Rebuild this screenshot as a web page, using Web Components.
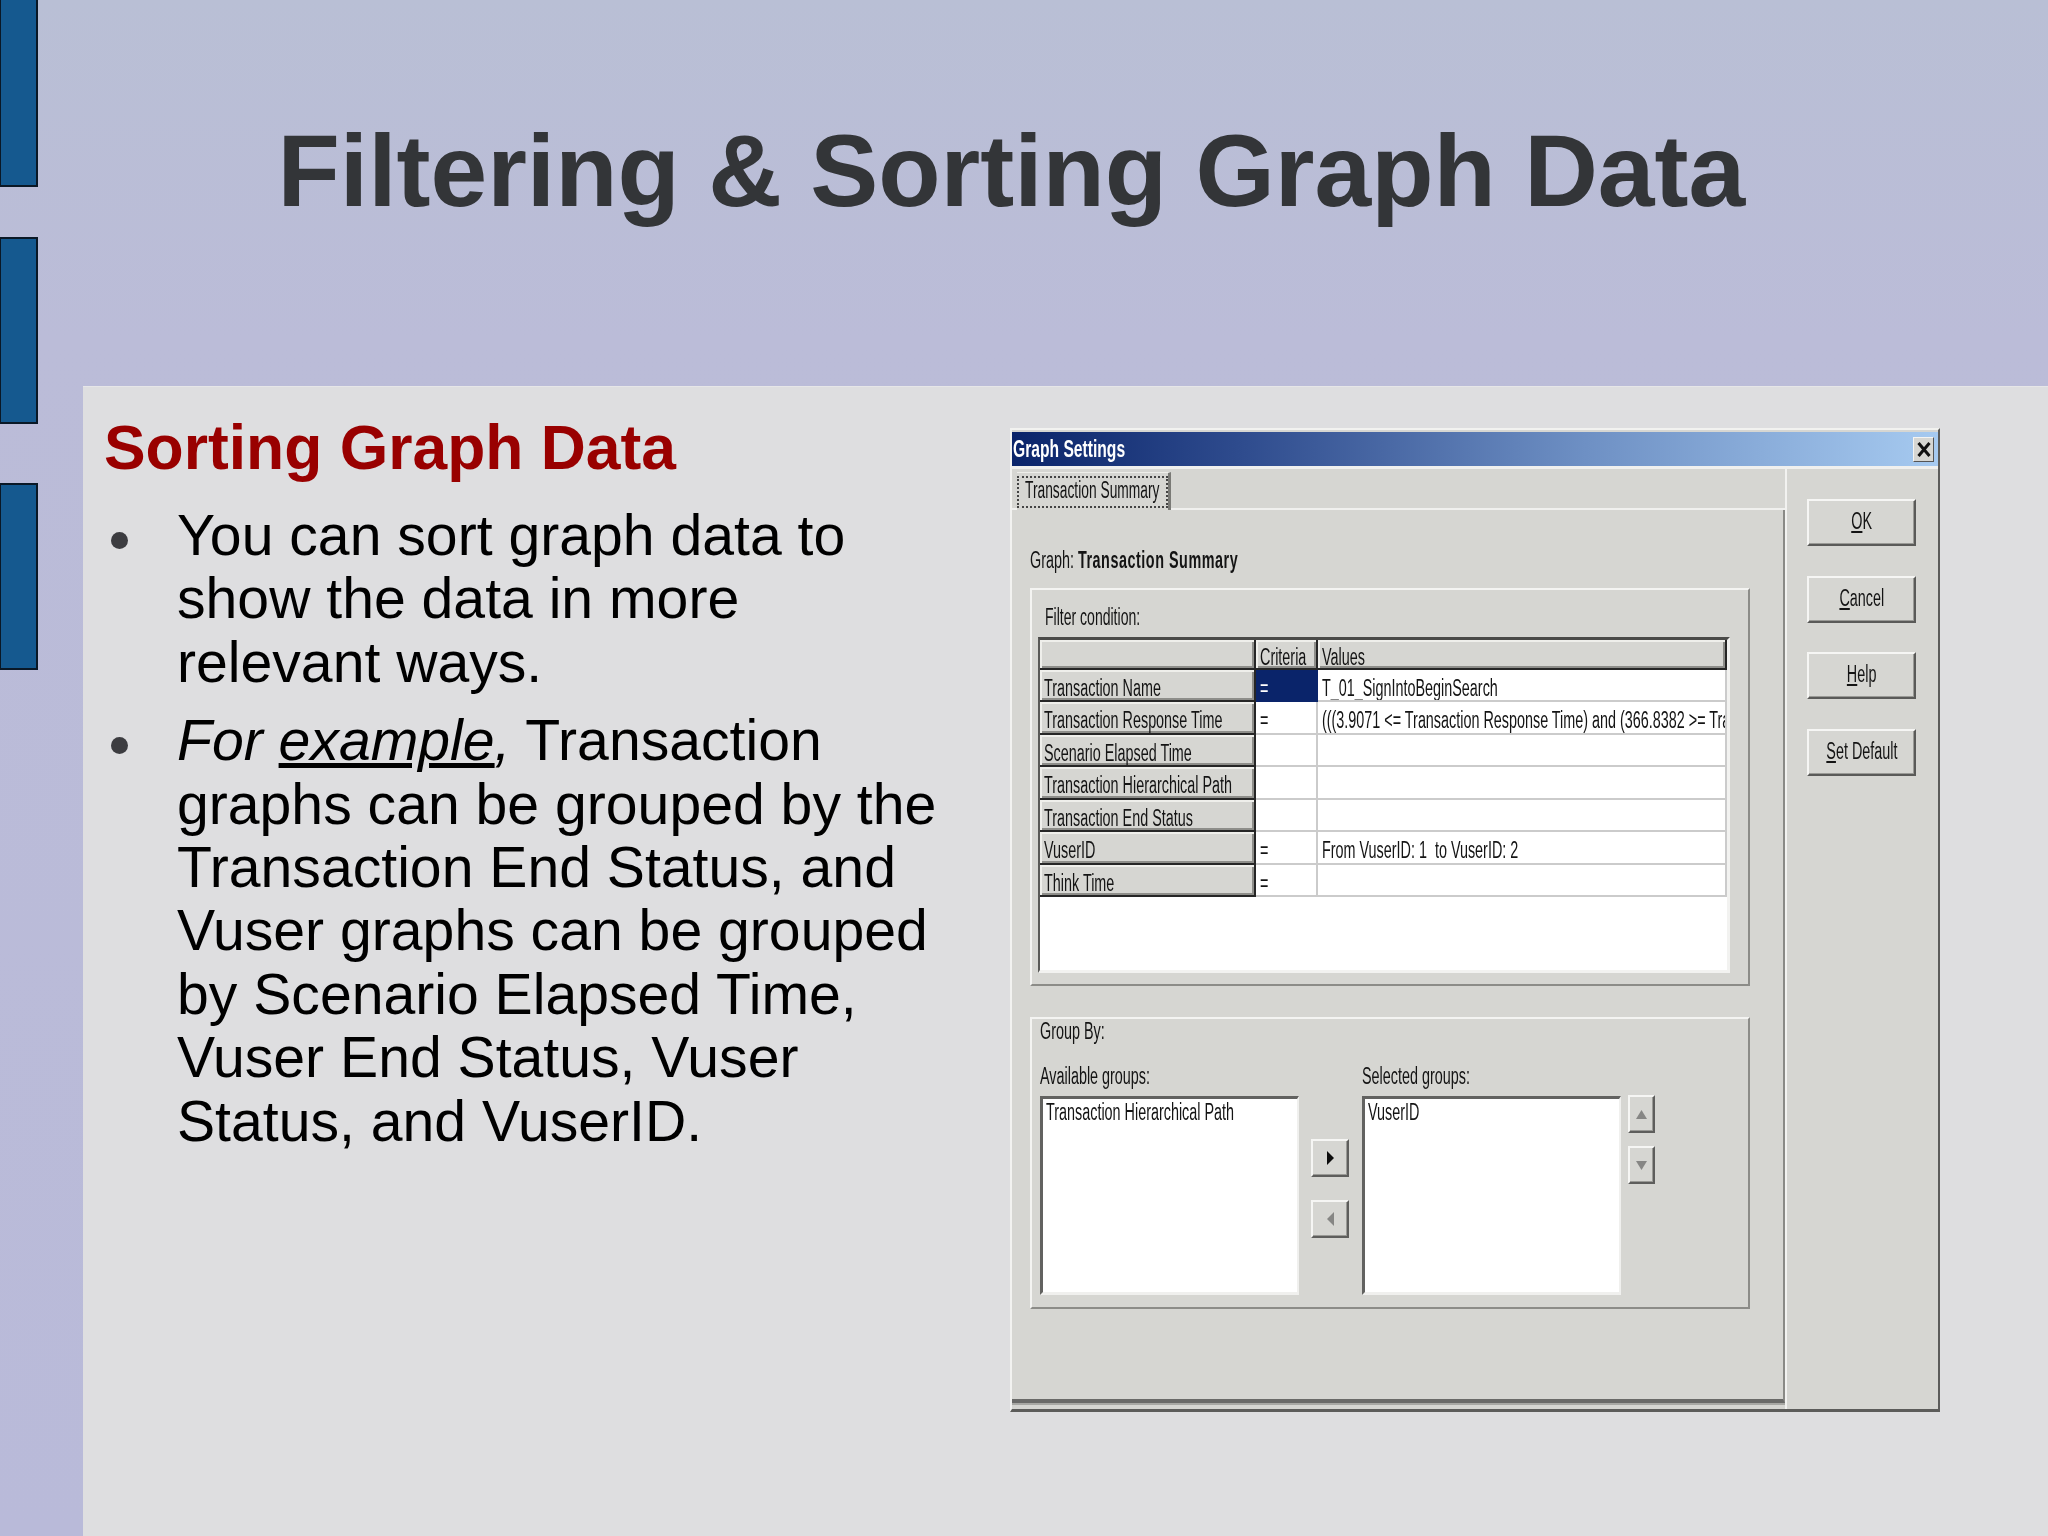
<!DOCTYPE html>
<html lang="en"><head><meta charset="utf-8"><title>Filtering &amp; Sorting Graph Data</title>
<style>html,body{margin:0;padding:0;background:#bcbbd8}</style></head>
<body>
<slide-deck>
  <side-bar slot="side"></side-bar>
  <side-bar slot="side"></side-bar>
  <side-bar slot="side"></side-bar>
  <slide-title slot="title">Filtering &amp; Sorting Graph Data</slide-title>
  <slide-notes slot="notes" heading="Sorting Graph Data">
    <bullet-item>You can sort graph data to show the data in more relevant ways.</bullet-item>
    <bullet-item><i>For <u>example</u>,</i> Transaction graphs can be grouped by the Transaction End Status, and Vuser graphs can be grouped by Scenario Elapsed Time, Vuser End Status, Vuser Status, and VuserID.</bullet-item>
  </slide-notes>
  <win-dialog slot="shot" caption="Graph Settings">
    <win-tab slot="tab"><win-t style="--sx:.6">Transaction Summary</win-t></win-tab>
    <div slot="graph"><win-t>Graph: <b style="letter-spacing:.85px">Transaction Summary</b></win-t></div>

    <win-group slot="filter" label="Filter condition:">
      <win-grid>
        <win-cell kind="head"></win-cell><win-cell kind="head"><win-t>Criteria</win-t></win-cell><win-cell kind="head"><win-t>Values</win-t></win-cell>

        <win-cell kind="head"><win-t>Transaction Name</win-t></win-cell><win-cell kind="sel"><win-t>=</win-t></win-cell><win-cell><win-t>T_01_SignIntoBeginSearch</win-t></win-cell>

        <win-cell kind="head"><win-t>Transaction Response Time</win-t></win-cell><win-cell><win-t>=</win-t></win-cell><win-cell><win-t>(((3.9071 &lt;= Transaction Response Time) and (366.8382 &gt;= Tra</win-t></win-cell>

        <win-cell kind="head"><win-t>Scenario Elapsed Time</win-t></win-cell><win-cell></win-cell><win-cell></win-cell>

        <win-cell kind="head"><win-t>Transaction Hierarchical Path</win-t></win-cell><win-cell></win-cell><win-cell></win-cell>

        <win-cell kind="head"><win-t>Transaction End Status</win-t></win-cell><win-cell></win-cell><win-cell></win-cell>

        <win-cell kind="head"><win-t>VuserID</win-t></win-cell><win-cell><win-t>=</win-t></win-cell><win-cell><win-t>From VuserID: 1&nbsp; to VuserID: 2</win-t></win-cell>

        <win-cell kind="head"><win-t>Think Time</win-t></win-cell><win-cell><win-t>=</win-t></win-cell><win-cell></win-cell>
      </win-grid>
    </win-group>

    <win-groupby slot="group">
      <win-t slot="title">Group By:</win-t>
      <win-t slot="avail-label">Available groups:</win-t>
      <win-t slot="sel-label">Selected groups:</win-t>
      <win-list slot="avail"><win-t>Transaction Hierarchical Path</win-t></win-list>
      <win-list slot="sel"><win-t>VuserID</win-t></win-list>
      <win-arrow slot="move" dir="right"></win-arrow>
      <win-arrow slot="move" dir="left" disabled></win-arrow>
      <win-arrow slot="order" dir="up" disabled></win-arrow>
      <win-arrow slot="order" dir="down" disabled></win-arrow>
    </win-groupby>

    <win-button slot="action"><win-t c><u>O</u>K</win-t></win-button>
    <win-button slot="action"><win-t c><u>C</u>ancel</win-t></win-button>
    <win-button slot="action"><win-t c><u>H</u>elp</win-t></win-button>
    <win-button slot="action"><win-t c><u>S</u>et Default</win-t></win-button>
  </win-dialog>
</slide-deck>

<script>
function def(name, css, html){
  customElements.define(name, class extends HTMLElement{
    constructor(){super();const s=this.attachShadow({mode:'open'});
      const h=typeof html==='function'?html(this):html;
      s.innerHTML='<style>'+css+'</style>'+h;}
  });
}
const SANS='"Liberation Sans",Arial,sans-serif';
def('slide-deck',`
  :host{display:grid;grid-template-columns:83px 1fr;width:2048px;height:1536px;overflow:hidden;
    background:linear-gradient(180deg,#b9bfd5 0,#bbbcd8 22%,#b9bad9 100%);font-family:${SANS}}
  .side{display:flex;flex-direction:column}
  .main{display:flex;flex-direction:column;min-width:0}
  .panel{flex:1;display:flex;background:#dedee0;border-top:1px solid #e6e6e8;min-height:0}
  .shot{padding-top:41px}
`,`<div class="side"><slot name="side"></slot></div>
<div class="main"><slot name="title"></slot>
<div class="panel"><slot name="notes"></slot><div class="shot"><slot name="shot"></slot></div></div></div>`);

def('side-bar',`
  :host{display:block;width:38px;height:187px;box-sizing:border-box;background:#15598f;border:2px solid #0a1826;border-left-width:1px}
  :host(:nth-of-type(1)){border-top:0}
  :host(:nth-of-type(2)){margin-top:50px}
  :host(:nth-of-type(3)){margin-top:59px}
`,``);

def('slide-title',`
  :host{display:block;height:386px;box-sizing:border-box;padding:113px 0 0 194.5px;font:bold 102px/116px ${SANS};color:#333538;white-space:nowrap}
`,`<slot></slot>`);

def('slide-notes',`
  :host{display:block;width:927px;box-sizing:border-box;padding:26px 0 0 21px;flex:none}
  h2{margin:0 0 21px;font:bold 62.4px/70px ${SANS};color:#990000;white-space:nowrap}
`,el=>`<h2>${el.getAttribute('heading')}</h2><slot></slot>`);

def('bullet-item',`
  :host{display:flex;margin-bottom:15px;font:57.15px/63.4px ${SANS};color:#000;width:841px}
  .m{flex:none;width:73px;position:relative}
  .m::before{content:"";position:absolute;left:7px;top:28px;width:17px;height:17px;border-radius:50%;background:#3c3c40}
  .t{width:768px}
`,`<div class="m"></div><div class="t"><slot></slot></div>`);

def('win-t',`
  :host{display:inline-block;white-space:nowrap;transform:scaleX(var(--sx,.625));transform-origin:0 50%}
  :host([c]){transform-origin:50% 50%}
`,`<slot></slot>`);

def('win-dialog',`
  :host{display:flex;flex-direction:column;width:930px;height:984px;box-sizing:border-box;background:#d6d6d2;
    border-top:2px solid #f2f2f0;border-left:2px solid #f2f2f0;border-right:2px solid #5c5c5a;border-bottom:3px solid #5c5c5a;
    padding-top:2px;font:23px/30px ${SANS};color:#141414;filter:blur(.45px)}
  .bar{flex:none;height:34px;background:linear-gradient(90deg,#0a246a 0,#2f4c8e 25%,#6e90c4 62%,#a6caf0 100%);display:flex;align-items:center;justify-content:space-between;padding:0 4px 0 1px;color:#fff;font-weight:bold}
  .cap{display:inline-block;white-space:nowrap;transform:scaleX(.68);transform-origin:0 50%}
  .x{width:21px;height:25px;box-sizing:border-box;background:#d6d6d2;border:1px solid;border-color:#f4f4f2 #555 #555 #f4f4f2;display:flex;align-items:center;justify-content:center}
  .x svg{display:block}
  .rule{flex:none;height:3px;background:#f0f0ee}
  .body{flex:1;display:flex;min-height:0}
  .left{flex:none;width:773px;display:flex;flex-direction:column}
  .tabs{flex:none;height:41px;box-sizing:border-box;padding:3px 0 0 5px;border-bottom:2px solid #f0f0ee}
  .pane{flex:none;height:893px;box-sizing:border-box;padding:35px 0 0 18px;border-right:2px solid #8a8a86;border-bottom:4px solid #6a6a68;box-shadow:0 2px 0 #a8a8a4}
  .gap1{height:13px}.gap2{height:31px}
  .right{flex:1;border-left:2px solid #f2f2f0;padding:30px 0 0 20px;display:flex;flex-direction:column;gap:29.5px}
`,el=>`
<div class="bar"><span class="cap">${el.getAttribute('caption')}</span>
  <div class="x"><svg width="14" height="15" viewBox="0 0 14 15"><path d="M1.5 1 L12.5 14 M12.5 1 L1.5 14" stroke="#111" stroke-width="3" fill="none"/></svg></div></div>
<div class="rule"></div>
<div class="body">
  <div class="left">
    <div class="tabs"><slot name="tab"></slot></div>
    <div class="pane"><slot name="graph"></slot><div class="gap1"></div><slot name="filter"></slot><div class="gap2"></div><slot name="group"></slot></div>
  </div>
  <div class="right"><slot name="action"></slot></div>
</div>`);

def('win-tab',`
  :host{display:block;width:154px;height:38px;box-sizing:border-box;border-right:3px solid #7a7a76;border-top:1px solid #eeeeea;position:relative;z-index:1;background:#d6d6d2;padding:3px 0 2px 0}
  .f{height:100%;box-sizing:border-box;border:2px dotted #444;padding:0 0 4px 6px;display:flex;align-items:center}
`,`<div class="f"><slot></slot></div>`);

def('win-group',`
  :host{display:block;width:720px;height:398px;box-sizing:border-box;border:2px solid;border-color:#f4f4f2 #8c8c88 #8c8c88 #f4f4f2;padding:11px 0 0 6px}
  .l{height:36px;padding-left:7px}
  span{display:inline-block;white-space:nowrap;transform:scaleX(.61);transform-origin:0 50%;position:relative;top:1px}
`,el=>`<div class="l"><span>${el.getAttribute('label')}</span></div><slot></slot>`);

def('win-grid',`
  :host{display:block;width:692px;height:336px;box-sizing:border-box;background:#fff;border-top:3px solid #4a4a48;border-left:2px solid #5a5a58;border-right:3px solid #f2f2f0;border-bottom:3px solid #f2f2f0}
  .g{display:grid;grid-template-columns:216px 62px 409px;grid-template-rows:29.5px repeat(7,32.5px)}
`,`<div class="g"><slot></slot></div>`);

def('win-cell',`
  :host{display:flex;align-items:center;box-sizing:border-box;padding:6px 0 0 4px;overflow:hidden;min-width:0;background:#fff;border-right:2px solid #cbcbcb;border-bottom:2px solid #cbcbcb}
  :host([kind=head]){background:#d6d6d2;border-right:2px solid #262626;border-bottom:2px solid #262626;box-shadow:inset 2px 2px 0 #efefeb,inset -2px -2px 0 #8e8e8a}
  :host([kind=sel]){background:#0a246a;color:#fff;border-right-color:#0a246a;border-bottom-color:#0a246a}
`,`<slot></slot>`);

def('win-groupby',`
  :host{display:block;width:720px;height:292px;box-sizing:border-box;border:2px solid;border-color:#f4f4f2 #8c8c88 #8c8c88 #f4f4f2;padding:2px 0 0 8px;line-height:20px}
  .h{height:20px}
  .g{display:grid;grid-template-columns:259px 63px 259px 40px;margin-top:25px}
  .lab{height:30px}
  .mv{grid-column:2;grid-row:2;display:flex;flex-direction:column;gap:23px;padding-top:43px;margin-left:12px}
  .sel{grid-column:3;grid-row:2}
  .ord{grid-column:4;grid-row:2;display:flex;flex-direction:column;gap:13px;margin-left:7px;margin-top:-1px}
  .av{grid-column:1;grid-row:2}
`,`<div class="h"><slot name="title"></slot></div>
<div class="g">
  <div class="lab"><slot name="avail-label"></slot></div>
  <div class="lab"></div>
  <div class="lab"><slot name="sel-label"></slot></div>
  <div class="lab"></div>
  <div class="av"><slot name="avail"></slot></div>
  <div class="mv"><slot name="move"></slot></div>
  <div class="sel"><slot name="sel"></slot></div>
  <div class="ord"><slot name="order"></slot></div>
</div>`);

def('win-list',`
  :host{display:block;height:199px;box-sizing:border-box;background:#fff;border-top:3px solid #626260;border-left:3px solid #626260;border-right:2px solid #f0f0ee;border-bottom:3px solid #f0f0ee;padding:0 0 0 3px;line-height:26px}
`,`<slot></slot>`);

def('win-button',`
  :host{display:flex;align-items:center;justify-content:center;width:109px;height:47px;box-sizing:border-box;background:#d6d6d2;border:2px solid;border-color:#f6f6f4 #5a5a58 #5a5a58 #f6f6f4;box-shadow:inset -1px -1px 0 #9a9a96;padding-bottom:3px}
`,`<slot></slot>`);

const ARROWS={
  right:['M0 0 L7 7 L0 14 Z',7,14],
  left:['M7 0 L0 7 L7 14 Z',7,14],
  up:['M5.5 0 L11 9 L0 9 Z',11,9],
  down:['M0 0 L11 0 L5.5 9 Z',11,9]
};
def('win-arrow',`
  :host{display:flex;align-items:center;justify-content:center;width:38px;height:38px;box-sizing:border-box;background:#d6d6d2;border:2px solid;border-color:#f6f6f4 #5e5e5c #5e5e5c #f6f6f4;box-shadow:inset -1px -1px 0 #9a9a96}
  :host([dir=up]),:host([dir=down]){width:27px}
`,el=>{const a=ARROWS[el.getAttribute('dir')];const col=el.hasAttribute('disabled')?'#868684':'#0c0c0c';
  return `<svg width="${a[1]}" height="${a[2]}" viewBox="0 0 ${a[1]} ${a[2]}"><path d="${a[0]}" fill="${col}"/></svg>`;});
</script>
</body></html>
